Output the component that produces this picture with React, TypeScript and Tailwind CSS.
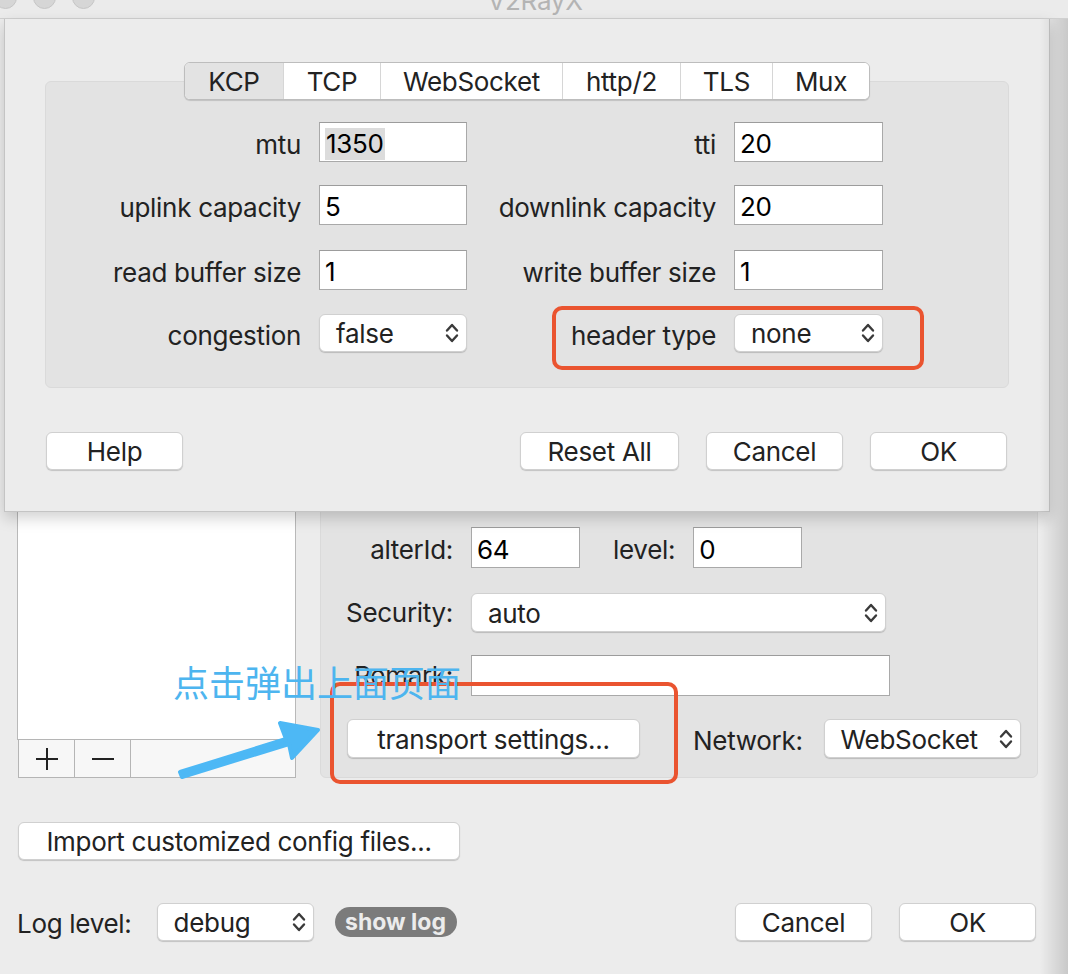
import React from 'react'

function Chevrons() {
  return (
    <svg width="16" height="26" viewBox="0 0 16 26" fill="none" stroke="#3a3a3a" strokeWidth="2.4" strokeLinecap="round" strokeLinejoin="round">
      <path d="M3 10.5 L8 5 L13 10.5" />
      <path d="M3 15.5 L8 21 L13 15.5" />
    </svg>
  )
}

function Field({ value, w, h = 'h-[40px]', selected }: { value: string; w: string; h?: string; selected?: boolean }) {
  return (
    <div className={`${w} ${h} bg-white border border-[#a9a9a9] border-t-[#9c9c9c] flex items-center pl-[5px] pt-[3px] text-[26px] text-black shrink-0`}>
      {selected ? <span className="bg-[#dcdcdc] px-[1px] leading-[32px]">{value}</span> : value}
    </div>
  )
}

function Popup({ value, w, h = 'h-[39px]' }: { value: string; w: string; h?: string }) {
  return (
    <div className={`${w} ${h} bg-white rounded-[6px] border border-[#d0d0d0] shadow-[0_1px_1px_rgba(0,0,0,0.18)] flex items-center justify-between pl-[16px] pr-[6px] text-[26px] text-[#222] shrink-0`}>
      <span className="pt-[1px]">{value}</span>
      <Chevrons />
    </div>
  )
}

function Button({ label, w, h = 'h-[38px]' }: { label: string; w: string; h?: string }) {
  return (
    <div className={`${w} ${h} bg-white rounded-[6px] border border-[#d0d0d0] shadow-[0_1px_1px_rgba(0,0,0,0.18)] flex items-center justify-center pt-[1px] text-[26px] text-[#222] shrink-0`}>
      {label}
    </div>
  )
}

function KcpRow({ l1, v1, l2, v2, mt, sel, popup }: { l1: string; v1: string; l2: string; v2: string; mt: string; sel?: boolean; popup?: boolean }) {
  return (
    <div className={`flex items-center h-[40px] ${mt}`}>
      <div className="w-[255px] text-right text-[26px] text-[#222] shrink-0 pt-[4px]">{l1}</div>
      <div className="ml-[18px]">
        {popup ? <Popup value={v1} w="w-[148px]" h="h-[38px]" /> : <Field value={v1} w="w-[148px]" selected={sel} />}
      </div>
      <div className="w-[249px] text-right text-[26px] text-[#222] shrink-0 pt-[4px]">{l2}</div>
      <div className="ml-[18px]">
        {popup ? <Popup value={v2} w="w-[149px]" h="h-[38px]" /> : <Field value={v2} w="w-[149px]" />}
      </div>
    </div>
  )
}

const tabs = [
  { name: 'KCP', w: 'w-[98px]' },
  { name: 'TCP', w: 'w-[97px]' },
  { name: 'WebSocket', w: 'w-[182px]' },
  { name: 'http/2', w: 'w-[118px]' },
  { name: 'TLS', w: 'w-[92px]' },
  { name: 'Mux', w: 'w-[97px]' },
]

export default function App() {
  return (
    <div className="relative w-[1068px] h-[974px] overflow-hidden bg-[#ececec] font-['Inter','Noto_Sans_CJK_SC',sans-serif] tracking-[-0.3px] text-[#222]">
      {/* title bar */}
      <div className="relative h-[19px] overflow-hidden bg-[#ebebeb] border-b border-[#d0d0d0] flex justify-center">
        <div className="absolute left-[-6px] top-[-14px] flex gap-[16px]">
          <div className="w-[23px] h-[23px] rounded-full bg-[#d6d6d6] border border-[#c6c6c6]" />
          <div className="w-[23px] h-[23px] rounded-full bg-[#d6d6d6] border border-[#c6c6c6]" />
          <div className="w-[23px] h-[23px] rounded-full bg-[#d6d6d6] border border-[#c6c6c6]" />
        </div>
        <div className="text-[26px] leading-[26px] -mt-[12px] text-[#b4b4b4] ml-[2px]">V2RayX</div>
      </div>

      {/* main window content */}
      <div className="px-[17px]">
        <div className="flex mt-[21px]">
          <div className="w-[279px] flex flex-col shrink-0">
            <div className="h-[700px] bg-white border border-[#b9b9b9]" />
            <div className="h-[39px] -mt-px ml-px flex border border-[#b5b5b5] bg-[#f7f7f7]">
              <div className="w-[56px] border-r border-[#b5b5b5] flex items-center justify-center">
                <svg width="24" height="24" viewBox="0 0 24 24" stroke="#222" strokeWidth="2"><path d="M12 1 V23 M1 12 H23" /></svg>
              </div>
              <div className="w-[56px] border-r border-[#b5b5b5] flex items-center justify-center">
                <svg width="24" height="24" viewBox="0 0 24 24" stroke="#222" strokeWidth="2"><path d="M1 12 H23" /></svg>
              </div>
              <div className="flex-1" />
            </div>
          </div>
          <div className="ml-[24px] w-[718px] h-[738px] bg-[#e3e3e3] border border-[#dadada] rounded-[6px] flex flex-col justify-end pb-[18px]">
            <div className="flex items-center h-[41px]">
              <div className="w-[132px] text-right text-[26px] pt-[3px]">alterId:</div>
              <div className="ml-[18px]"><Field value="64" w="w-[109px]" h="h-[41px]" /></div>
              <div className="ml-[33px] text-[26px] pt-[3px]">level:</div>
              <div className="ml-[18px]"><Field value="0" w="w-[109px]" h="h-[41px]" /></div>
            </div>
            <div className="flex items-center h-[39px] mt-[25px]">
              <div className="w-[132px] text-right text-[26px]">Security:</div>
              <div className="ml-[18px]"><Popup value="auto" w="w-[415px]" /></div>
            </div>
            <div className="flex items-center h-[41px] mt-[23px]">
              <div className="w-[132px] text-right text-[26px]">Remark:</div>
              <div className="ml-[18px]"><Field value="" w="w-[419px]" h="h-[41px]" /></div>
            </div>
            <div className="flex items-center h-[41px] mt-[22px] pl-[26px]">
              <Button label="transport settings..." w="w-[293px]" h="h-[39px]" />
              <div className="ml-[53px] text-[26px] pt-[3px]">Network:</div>
              <div className="ml-[21px]"><Popup value="WebSocket" w="w-[197px]" /></div>
            </div>
          </div>
        </div>

        <div className="mt-[44px] ml-px">
          <Button label="Import customized config files..." w="w-[442px]" />
        </div>

        <div className="mt-[43px] w-[1019px] flex items-center h-[38px]">
          <div className="text-[26px] pt-[2px]">Log level:</div>
          <div className="ml-[25px]"><Popup value="debug" w="w-[157px]" h="h-[38px]" /></div>
          <div className="ml-[21px] w-[122px] h-[30px] rounded-full bg-[#7b7b7b] text-[#ececec] font-bold text-[23px] tracking-normal flex items-center justify-center">show log</div>
          <div className="flex-1" />
          <Button label="Cancel" w="w-[137px]" />
          <div className="ml-[27px]"><Button label="OK" w="w-[137px]" /></div>
        </div>
      </div>

      {/* sheet */}
      <div className="absolute left-[4px] top-[19px] w-[1046px] h-[493px] bg-[#ececec] border-x border-b border-[#c4c4c4] shadow-[0_6px_14px_rgba(0,0,0,0.18)] px-[40px] pt-[43px] flex flex-col">
        <div className="relative z-10 self-center flex h-[38px] rounded-[6px] border border-[#bdbdbd] bg-white overflow-hidden shadow-[0_1px_1px_rgba(0,0,0,0.15)]">
          {tabs.map((t, i) => (
            <div
              key={t.name}
              className={`${t.w} flex items-center justify-center text-[26px] text-[#222] ${i > 0 ? 'border-l border-[#d6d6d6]' : ''} ${i === 0 ? 'bg-[#e3e3e3]' : 'bg-white'}`}
            >
              {t.name}
            </div>
          ))}
        </div>
        <div className="-mt-[19px] h-[307px] bg-[#e3e3e3] border border-[#dadada] rounded-[6px] flex flex-col">
          <KcpRow l1="mtu" v1="1350" l2="tti" v2="20" mt="mt-[40px]" sel />
          <KcpRow l1="uplink capacity" v1="5" l2="downlink capacity" v2="20" mt="mt-[23px]" />
          <KcpRow l1="read buffer size" v1="1" l2="write buffer size" v2="1" mt="mt-[25px]" />
          <KcpRow l1="congestion" v1="false" l2="header type" v2="none" mt="mt-[23px]" popup />
        </div>
        <div className="mt-[44px] flex pl-px pr-[2px]">
          <Button label="Help" w="w-[137px]" />
          <div className="flex-1" />
          <Button label="Reset All" w="w-[159px]" />
          <div className="ml-[27px]"><Button label="Cancel" w="w-[137px]" /></div>
          <div className="ml-[27px]"><Button label="OK" w="w-[137px]" /></div>
        </div>
      </div>

      {/* right edge shade */}
      <div className="absolute right-0 top-[19px] bottom-0 w-[28px] bg-linear-to-r from-transparent to-black/15 pointer-events-none" />

      {/* annotations */}
      <div className="absolute left-[552px] top-[306px] w-[372px] h-[64px] border-[4px] border-[#ea5430] rounded-[10px]" />
      <div className="absolute left-[330px] top-[682px] w-[348px] h-[102px] border-[4px] border-[#ea5430] rounded-[10px]" />
      <div className="absolute left-[173px] top-[659px] text-[36px] leading-[44px] tracking-normal text-[#4db5ef] font-['Noto_Sans_CJK_SC',sans-serif]">点击弹出上面页面</div>
      <svg className="absolute left-[170px] top-[715px]" width="160" height="70" viewBox="0 0 160 70">
        <path d="M10 57 L116 24 L110 8 L148 15 L122 43 L119 29 L12 62 Z" fill="#4db8f5" stroke="#4db8f5" strokeWidth="4" strokeLinejoin="round" />
      </svg>
    </div>
  )
}
